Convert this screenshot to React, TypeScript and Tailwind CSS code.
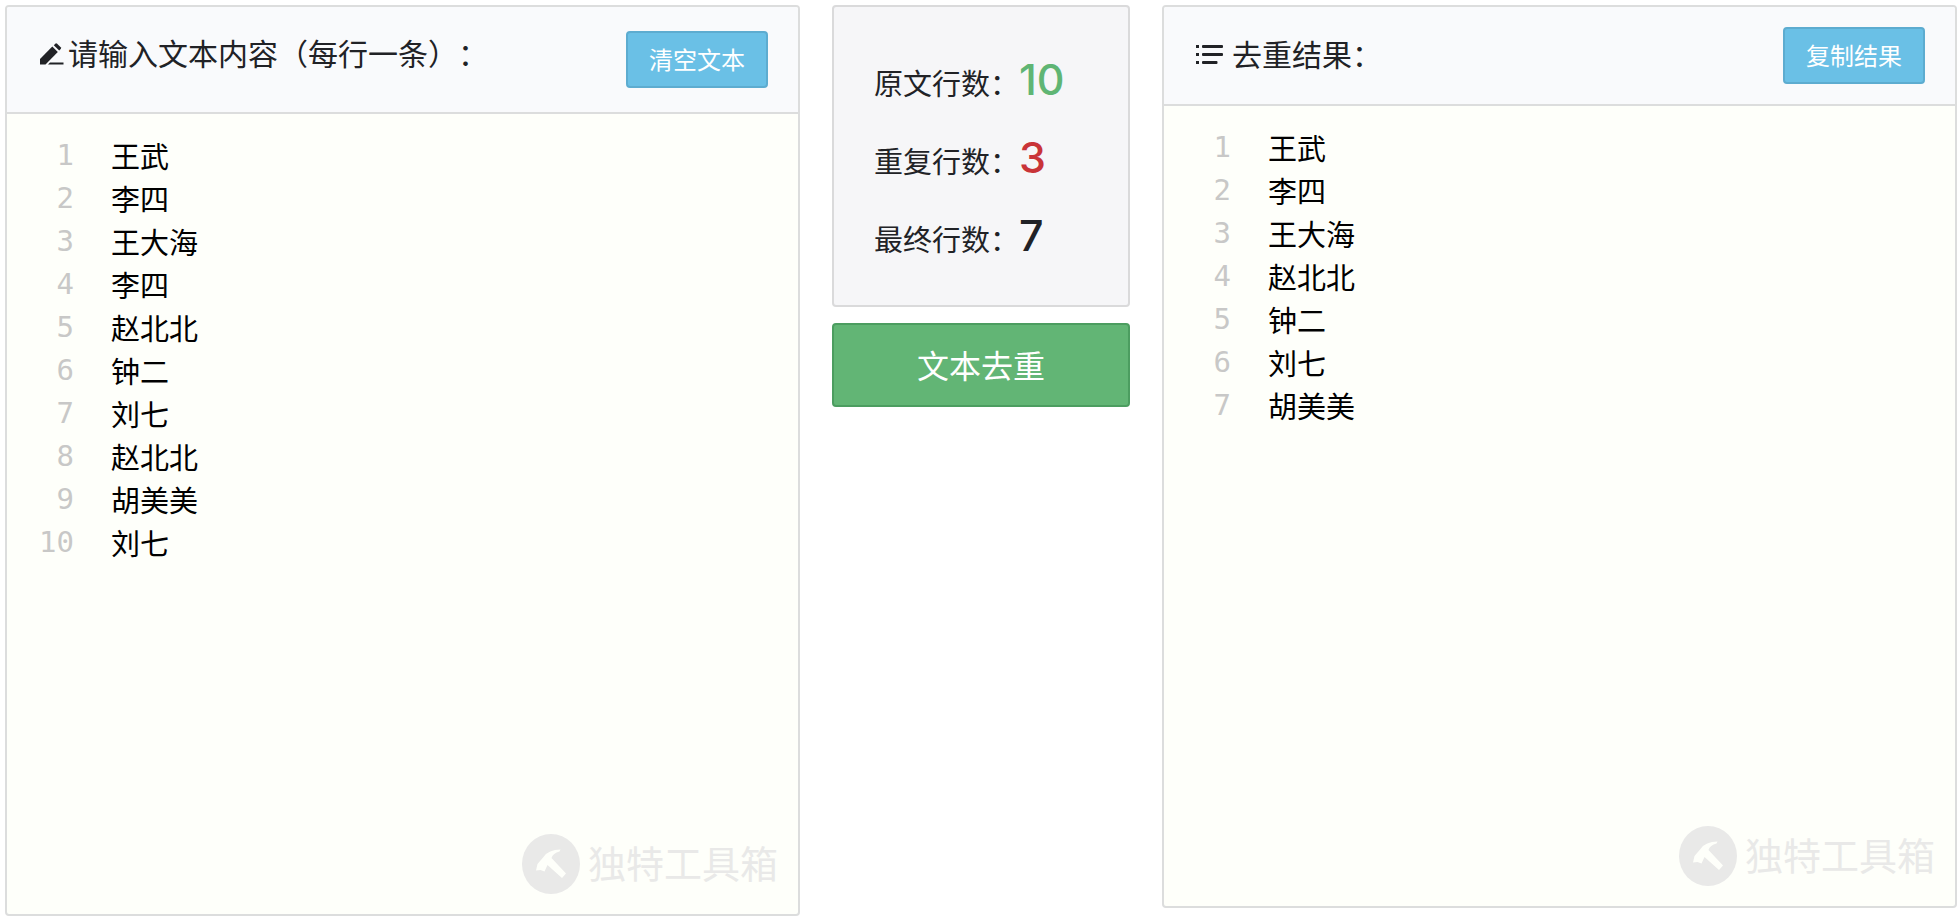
import { useState } from "react";
import type { ReactNode } from "react";

const SAMPLE = ["王武", "李四", "王大海", "李四", "赵北北", "钟二", "刘七", "赵北北", "胡美美", "刘七"].join("\n");

const toLines = (text: string) => (text === "" ? [] : text.split("\n"));
const unique = (text: string) => Array.from(new Set(toLines(text))).join("\n");

function PencilIcon() {
  return (
    <svg viewBox="0 -4 24 26" className="h-[26px] w-6 shrink-0" fill="currentColor" aria-hidden="true">
      <path d="M0 21.500v-5.500L12.300 3.500l5.500 5.500L5.500 21.500z" />
      <path d="M13.800 2.200l1.500-1.500q.9-.8 1.800 0l3.600 3.600q.8.900 0 1.800L19.200 7.600z" />
      <path d="M10 19.500h13.500v2H8z" />
    </svg>
  );
}

function ListIcon() {
  return (
    <svg viewBox="0 -3 28 22" className="h-[22px] w-7 shrink-0" fill="currentColor" aria-hidden="true">
      <path d="M0 0h3v3H0zM0 8h3v3H0zM0 16h3v3H0z" />
      <rect x="6" y="0" width="21" height="3" rx="1" />
      <rect x="6" y="8" width="21" height="3" rx="1" />
      <rect x="6" y="16" width="15.500" height="3" rx="1" />
    </svg>
  );
}

function Watermark() {
  return (
    <div className="pointer-events-none absolute right-5 bottom-5 flex items-center gap-2 text-[#e9e9e8]">
      <svg viewBox="0 0 58 60" className="h-[60px] w-[58px]" aria-hidden="true">
        <ellipse cx="29" cy="30" rx="29" ry="30" fill="currentColor" />
        <path
          d="M14 36.500l1.500-6.500 6-7q5-7.500 17-7.500l-1 2q-6.500 1.500-8 6.500L44 39.500 40 44 25.500 31l-3 6.500-4-1.500z"
          fill="#fefffa"
        />
      </svg>
      <span className="pb-1 text-[38px] leading-[56px]">独特工具箱</span>
    </div>
  );
}

type PanelProps = { header: ReactNode; children: ReactNode };

function Panel({ header, children }: PanelProps) {
  return (
    <section className="min-w-0 flex-1 overflow-hidden rounded border-2 border-[#dcdddd] bg-[#fefffa]">
      {header}
      <div className="relative flex min-h-[800px] pt-5">
        {children}
        <Watermark />
      </div>
    </section>
  );
}

type EditorProps = { label: string; value: string; onChange?: (value: string) => void };

function Editor({ label, value, onChange }: EditorProps) {
  const lines = toLines(value);
  return (
    <>
      <ol
        aria-hidden="true"
        className="w-[67px] shrink-0 text-right font-['DejaVu_Sans_Mono',monospace] text-[29px] leading-[43px] text-[#c8c8c7]"
      >
        {lines.map((_, i) => (
          <li key={i}>{i + 1}</li>
        ))}
      </ol>
      <textarea
        aria-label={label}
        readOnly={!onChange}
        spellCheck={false}
        value={value}
        onChange={(e) => onChange?.(e.target.value)}
        className="ml-[37px] min-w-0 flex-1 resize-none bg-transparent text-[29px] leading-[43px] text-black outline-none"
      />
    </>
  );
}

type SmallButtonProps = { onClick: () => void; children: ReactNode };

function SmallButton({ onClick, children }: SmallButtonProps) {
  return (
    <button
      type="button"
      onClick={onClick}
      className="h-[57px] shrink-0 rounded border-2 border-[#5dacd0] bg-[#6ac0e6] px-[21px] pb-[2px] text-[24px] leading-[32px] text-white"
    >
      {children}
    </button>
  );
}

type StatProps = { label: string; value: number; color: string };

function Stat({ label, value, color }: StatProps) {
  return (
    <div className="flex h-[78px] items-baseline leading-[78px]">
      <dt className="text-[29px]">{label}</dt>
      <dd className={`font-['Inter',sans-serif] text-[43px] font-medium ${color}`}>{value}</dd>
    </div>
  );
}

export default function App() {
  const [text, setText] = useState(SAMPLE);
  const [result, setResult] = useState(unique(SAMPLE));
  const total = toLines(text).length;
  const kept = toLines(result).length;

  return (
    <main className="flex items-start gap-8 bg-white pt-[5px] pr-[3px] pl-[5px] font-['Noto_Sans_CJK_SC',sans-serif] text-[#212226] [text-spacing-trim:space-all]">
      <Panel
        header={
          <header className="flex items-start justify-between border-b-2 border-[#dcdddd] bg-[#f9fafc] py-6 pr-[30px] pl-[33px]">
            <h2 className="flex items-center gap-1 text-[30px] leading-[42px]">
              <PencilIcon />
              请输入文本内容（每行一条）：
            </h2>
            <SmallButton onClick={() => setText("")}>清空文本</SmallButton>
          </header>
        }
      >
        <Editor label="文本内容" value={text} onChange={setText} />
      </Panel>

      <div className="flex w-[298px] shrink-0 flex-col gap-4">
        <dl className="h-[302px] rounded border-2 border-[#dadadb] bg-[#f6f6f8] px-10 pt-[33px]">
          <Stat label="原文行数：" value={total} color="text-[#5fb574]" />
          <Stat label="重复行数：" value={total - kept} color="text-[#c93438]" />
          <Stat label="最终行数：" value={kept} color="text-[#212226]" />
        </dl>
        <button
          type="button"
          onClick={() => setResult(unique(text))}
          className="h-[84px] rounded border-2 border-[#4c9d60] bg-[#62b575] pb-[2px] text-[32px] text-white"
        >
          文本去重
        </button>
      </div>

      <Panel
        header={
          <header className="flex items-start justify-between border-b-2 border-[#dcdddd] bg-[#f9fafc] py-5 pr-[30px] pl-8">
            <h2 className="flex items-center gap-2 text-[30px] leading-[52px]">
              <ListIcon />
              去重结果：
            </h2>
            <SmallButton onClick={() => navigator.clipboard?.writeText(result)}>复制结果</SmallButton>
          </header>
        }
      >
        <Editor label="去重结果" value={result} />
      </Panel>
    </main>
  );
}
